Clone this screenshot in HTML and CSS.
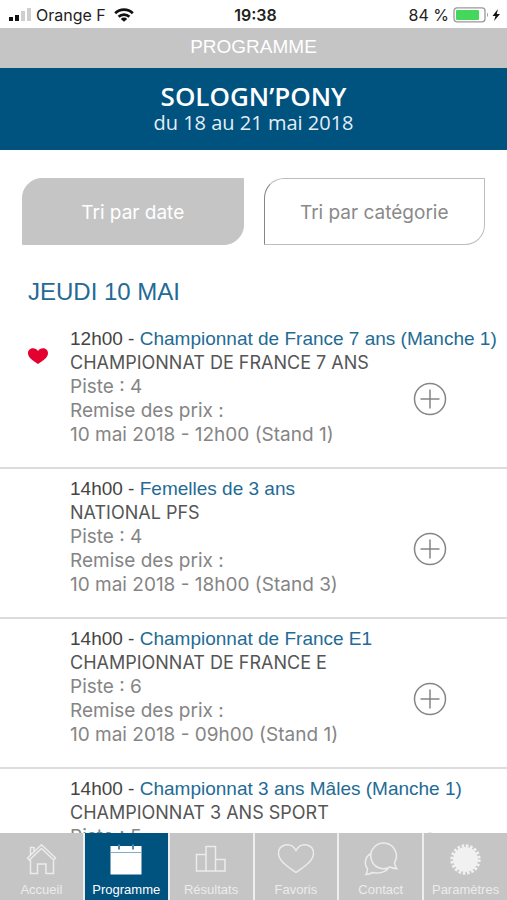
FILE: index.html
```html
<!DOCTYPE html>
<html lang="fr">
<head>
<meta charset="utf-8">
<meta name="viewport" content="width=device-width, initial-scale=1">
<title>Programme</title>
<link rel="stylesheet" href="styles.css">
</head>
<body>
<div class="status">
  <div class="status-left">
    <svg width="24" height="14" viewBox="0 0 24 14"><path d="M1 9h4v4H1zM7 7h4v6H7z" fill="#111"/><path d="M13 3h4v10h-4zM19 0h4v13h-4z" fill="#cfcfcf"/></svg>
    <span>Orange F</span>
    <svg class="wifi" width="20" height="14" viewBox="0 0 20 14" fill="none" stroke="#111" stroke-width="2.7"><path d="M1.200 5.200a12.500 12.500 0 0 1 17.600 0M4.600 8.800a7.700 7.700 0 0 1 10.800 0"/><path d="M10 13.800L6.800 10.900a4.500 4.500 0 0 1 6.400 0z" fill="#111" stroke="none"/></svg>
  </div>
  <strong>19:38</strong>
  <div class="status-right">
    <span>84 %</span>
    <svg width="50" height="16" viewBox="0 0 50 16"><rect x="1" y=".8" width="31" height="14" rx="3" fill="#fff" stroke="#999" stroke-width="1.300"/><rect x="3" y="3" width="23" height="10" rx="1" fill="#44d75c"/><path d="M34 5.500q2 2.300 0 4.600z" fill="#999"/><path d="M45 2l-5.500 7h3L41 14l6-7h-3.300z" fill="#111"/></svg>
  </div>
</div>
<header>
  <div class="bar">PROGRAMME</div>
  <div class="event">
    <h1>SOLOGN’PONY</h1>
    <p>du 18 au 21 mai 2018</p>
  </div>
</header>
<main>
  <div class="sort">
    <button class="sort-button active" type="button">Tri par date</button>
    <button class="sort-button" type="button">Tri par catégorie</button>
  </div>
  <h2>JEUDI 10 MAI</h2>
  <article class="item">
    <div class="mark"><svg width="22" height="18" viewBox="0 0 22 18"><path d="M11 17C6 13.500 1 10.500 1 6.200 1 .5 8.500-.3 11 4 13.500-.3 21 .5 21 6.200 21 10.500 16 13.500 11 17z" fill="#e4002f"/></svg></div>
    <div class="content">
      <h3>12h00 - <a href="#">Championnat de France 7 ans (Manche 1)</a></h3>
      <div class="row">
        <div class="details"><p class="category">CHAMPIONNAT DE FRANCE 7 ANS</p><p>Piste : 4</p><p>Remise des prix :</p><p>10 mai 2018 - 12h00 (Stand 1)</p></div>
        <button class="add" type="button" aria-label="Ajouter"><svg width="34" height="34" viewBox="0 0 34 34"><circle cx="17" cy="17" r="15.500"/><path d="M17 7.500v19M7.500 17h19"/></svg></button>
      </div>
    </div>
  </article>
  <article class="item">
    <div class="mark"></div>
    <div class="content">
      <h3>14h00 - <a href="#">Femelles de 3 ans</a></h3>
      <div class="row">
        <div class="details"><p class="category">NATIONAL PFS</p><p>Piste : 4</p><p>Remise des prix :</p><p>10 mai 2018 - 18h00 (Stand 3)</p></div>
        <button class="add" type="button" aria-label="Ajouter"><svg width="34" height="34" viewBox="0 0 34 34"><circle cx="17" cy="17" r="15.500"/><path d="M17 7.500v19M7.500 17h19"/></svg></button>
      </div>
    </div>
  </article>
  <article class="item">
    <div class="mark"></div>
    <div class="content">
      <h3>14h00 - <a href="#">Championnat de France E1</a></h3>
      <div class="row">
        <div class="details"><p class="category">CHAMPIONNAT DE FRANCE E</p><p>Piste : 6</p><p>Remise des prix :</p><p>10 mai 2018 - 09h00 (Stand 1)</p></div>
        <button class="add" type="button" aria-label="Ajouter"><svg width="34" height="34" viewBox="0 0 34 34"><circle cx="17" cy="17" r="15.500"/><path d="M17 7.500v19M7.500 17h19"/></svg></button>
      </div>
    </div>
  </article>
  <article class="item tall">
    <div class="mark"></div>
    <div class="content">
      <h3>14h00 - <a href="#">Championnat 3 ans Mâles (Manche 1)</a></h3>
      <div class="row">
        <div class="details"><p class="category">CHAMPIONNAT 3 ANS SPORT</p><p>Piste : 5</p></div>
        <button class="add" type="button" aria-label="Ajouter"><svg width="34" height="34" viewBox="0 0 34 34"><circle cx="17" cy="17" r="15.500"/><path d="M17 7.500v19M7.500 17h19"/></svg></button>
      </div>
    </div>
  </article>
</main>
<nav>
  <a href="#"><svg width="38" height="38" viewBox="0 0 38 38"><path d="M5.500 19L19.500 5.800 33.500 19l-1.800 2L19.500 9.500 7.300 21zM8.500 16V8.500h3.500V12.500M8.500 20.500V34.500h7V25h8.500v9.500h7.500V20.500"/></svg>Accueil</a>
  <a href="#" class="current"><svg width="38" height="38" viewBox="0 0 38 38"><path d="M3.500 7h31v28.500h-31z" fill="#fff" stroke="none"/><path d="M3.500 13.500h31" stroke="#85aac1" stroke-width="1"/><path d="M12 5.500v5M26 5.500v5" stroke="#5289aa" stroke-width="2"/></svg>Programme</a>
  <a href="#"><svg width="38" height="38" viewBox="0 0 38 38"><path d="M4.500 15.500H14V32H4.500zM14 7.500h9.500V32H14zM23.500 20.500H33V32h-9.500z"/></svg>Résultats</a>
  <a href="#"><svg width="38" height="38" viewBox="0 0 38 38"><path d="M19 33.500C12 28.500 1.500 22 1.500 14.500 1.500 5 14 2.500 19 11.500 24 2.500 36.500 5 36.500 14.500 36.500 22 26 28.500 19 33.500z"/></svg>Favoris</a>
  <a href="#"><svg width="38" height="38" viewBox="0 0 38 38"><path d="M28 28A12.800 12.800 0 1 1 32.500 23.600C32.700 26 33.300 28 34.800 29.700 32.500 29.500 30 29 28 28zM9 14.500C2.500 18 2 25.500 5.500 29.500 5.500 32 5 34 4 35.500 6.500 35.500 8.500 34.800 10.500 33.500 16 35 22.500 33.500 26 30"/></svg>Contact</a>
  <a href="#"><svg width="38" height="38" viewBox="0 0 38 38"><circle cx="18.500" cy="20.500" r="12.500" fill="#f1f1f1" stroke="none"/><circle cx="18.500" cy="20.500" r="13.700" stroke="#f1f1f1" stroke-width="3" stroke-dasharray="2.600 1.704"/></svg>Paramètres</a>
</nav>
</body>
</html>
```
FILE: styles.css
```css
* { box-sizing: border-box; }
body {
  margin: 0;
  height: 100vh;
  display: flex;
  flex-direction: column;
  background: #fff;
  color: #858585;
  font-family: Inter, "Liberation Sans", sans-serif;
  overflow: hidden;
}
h1, h2, h3, p { margin: 0; font-weight: 400; }
a { text-decoration: none; }
button { font: inherit; cursor: pointer; }
svg { display: block; flex: none; }
.status {
  flex: none;
  height: 28px;
  padding: 2px 4px 0 8px;
  display: grid;
  grid-template-columns: 1fr auto 1fr;
  align-items: center;
  color: #222;
  font-size: 16px;
}
.status strong { font-weight: 600; }
.status-left, .status-right { display: flex; align-items: center; gap: 4px; }
.status-right { justify-content: flex-end; }
.wifi { margin-left: 4px; }
header { flex: none; color: #fff; text-align: center; }
.bar {
  height: 40px;
  line-height: 38px;
  background: #c5c5c5;
  font-family: "Liberation Sans", sans-serif;
  font-size: 19px;
}
.event {
  height: 82px;
  padding-top: 14px;
  background: #00527f;
  font-family: "Open Sans", sans-serif;
}
.event h1 { font-size: 26px; line-height: 28px; font-weight: 600; }
.event p { font-size: 20px; line-height: 26px; color: #e4eef5; }
main { flex: 1; min-height: 0; overflow: hidden; }
.sort { display: flex; gap: 20px; padding: 28px 22px 0; }
.sort-button {
  flex: 1;
  height: 67px;
  padding: 2px 0 0;
  border: 1px solid #bdbdbd;
  border-left-color: #858585;
  border-radius: 20px 0 20px 0;
  background: #fff;
  color: #8a8a8a;
  font-size: 19px;
}
.sort-button.active { background: #c5c5c5; border-color: #c5c5c5; color: #fff; }
h2 {
  padding: 32px 28px 12px;
  color: #236b94;
  font-family: "Liberation Sans", sans-serif;
  font-size: 24px;
  line-height: 30px;
}
.item { display: flex; padding: 8px 0 20px; border-bottom: 2px solid #dcdcdc; }
.mark { flex: none; width: 70px; padding: 20px 0 0 27px; }
.content { flex: 1; min-width: 0; }
h3 {
  color: #444;
  font-family: "Liberation Sans", sans-serif;
  font-size: 19px;
  line-height: 24px;
  white-space: nowrap;
}
h3 a { color: #236b94; }
.row {
  display: flex;
  align-items: center;
  justify-content: space-between;
  padding-right: 60px;
}
.tall .row { min-height: 96px; }
.tall .details { align-self: flex-start; }
.details { flex: 1; min-width: 0; font-size: 19px; line-height: 24px; white-space: nowrap; }
.category { color: #555; font-size: 18px; }
.add { padding: 0; border: 0; background: none; }
.add svg { fill: none; stroke: #858585; stroke-width: 1.5; }
nav {
  flex: none;
  height: 67px;
  display: grid;
  grid-template-columns: repeat(6, 1fr);
  gap: 2px;
  background: #eee;
}
nav a {
  min-width: 0;
  padding-top: 6px;
  display: flex;
  flex-direction: column;
  align-items: center;
  gap: 4px;
  background: #c5c5c5;
  color: #ececec;
  font-family: "Liberation Sans", sans-serif;
  font-size: 13px;
  line-height: 18px;
}
nav svg { fill: none; stroke: #ececec; stroke-width: 1.5; }
nav .current { background: #00527f; color: #fff; }
```
